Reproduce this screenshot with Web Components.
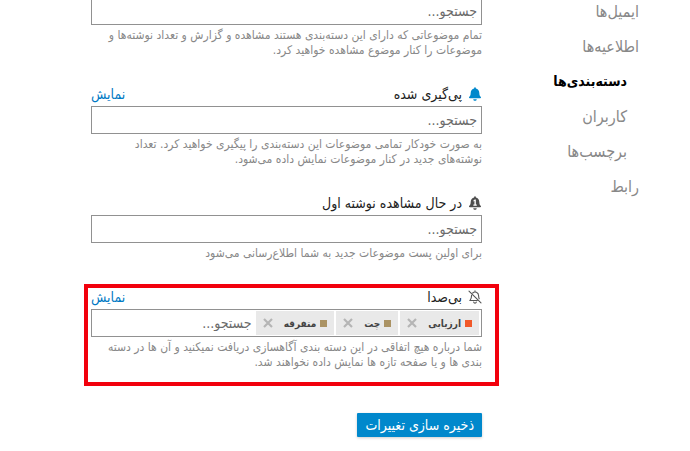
<!DOCTYPE html>
<html lang="fa" dir="rtl">
<head>
<meta charset="utf-8">
<meta name="viewport" content="width=device-width, initial-scale=1">
<title>دسته‌بندی‌ها</title>
<style>
body {
  margin: 0;
  background: #fff;
  color: #222;
  font-family: "DejaVu Sans Condensed", "DejaVu Sans", sans-serif;
  font-size: 14px;
}
</style>
</head>
<body>
<preferences-page>
  <side-nav slot="nav">
    <nav-item>ایمیل‌ها</nav-item>
    <nav-item>اطلاعیه‌ها</nav-item>
    <nav-item sub active>دسته‌بندی‌ها</nav-item>
    <nav-item sub>کاربران</nav-item>
    <nav-item sub>برچسب‌ها</nav-item>
    <nav-item>رابط</nav-item>
  </side-nav>
  <category-field untitled>
    <span slot="help">تمام موضوعاتی که دارای این دسته‌بندی هستند مشاهده و گزارش و تعداد نوشته‌ها و<br>موضوعات را کنار موضوع مشاهده خواهید کرد.</span>
  </category-field>
  <category-field icon="bell" link="نمایش">
    پی‌گیری شده
    <span slot="help">به صورت خودکار تمامی موضوعات این دسته‌بندی را پیگیری خواهید کرد. تعداد<br>نوشته‌های جدید در کنار موضوعات نمایش داده می‌شود.</span>
  </category-field>
  <category-field icon="first">
    در حال مشاهده نوشته اول
    <span slot="help">برای اولین پست موضوعات جدید به شما اطلاع‌رسانی می‌شود</span>
  </category-field>
  <category-field icon="muted" link="نمایش" marked>
    بی‌صدا
    <category-chip slot="chips" color="#f1592a">ارزیابی</category-chip>
    <category-chip slot="chips" color="#ab9364">چت</category-chip>
    <category-chip slot="chips" color="#ab9364">متفرقه</category-chip>
    <span slot="help">شما درباره هیچ اتفاقی در این دسته بندی آگاهسازی دریافت نمیکنید و آن ها در دسته<br>بندی ها و یا صفحه تازه ها نمایش داده نخواهند شد.</span>
  </category-field>
  <save-button>ذخیره سازی تغییرات</save-button>
</preferences-page>

<script>
const bellPath = 'M224 512c35.32 0 63.97-28.65 63.97-64H160.03c0 35.35 28.65 64 63.97 64zm215.39-149.71c-19.32-20.76-55.47-51.99-55.47-154.29 0-77.7-54.48-139.9-127.94-155.16V32c0-17.67-14.32-32-31.98-32s-31.98 14.33-31.98 32v20.84C118.56 68.1 64.08 130.3 64.08 208c0 102.3-36.15 133.53-55.47 154.29-6 6.45-8.66 14.16-8.61 21.71.11 16.4 12.98 32 32.1 32h383.8c19.12 0 32-15.6 32.1-32 .05-7.55-2.61-15.27-8.61-21.71z';

const icons = {
  bell: `<svg viewBox="0 0 448 512" width="12" height="14" fill="#0088cc"><path d="${bellPath}"/></svg>`,
  first: `<svg viewBox="0 0 448 512" width="12" height="14" fill="#4d4d4d"><path d="${bellPath}"/><path d="M165 165l48-38h42v186h36v42H163v-42h40V182l-38 22z" fill="#fff"/></svg>`,
  muted: `<svg viewBox="0 0 14 14" width="14" height="14" fill="none" stroke="#555" stroke-width="1.1" stroke-linecap="round"><path d="M1 1.2L13 12.8M4.7 3C6.8.9 10.6 2.4 10.6 5.8c0 1.2.2 2.1.6 2.9M3.6 5.2c0 2.8-.7 3.8-1.6 5.3h7.2M7 .8v1.1"/><path d="M5.7 12.1c.4 1.3 2.2 1.3 2.6 0"/></svg>`
};

function render(el, html) {
  const template = document.createElement('template');
  template.innerHTML = html;
  el.attachShadow({mode: 'open'}).appendChild(template.content.cloneNode(true));
}

class PreferencesPage extends HTMLElement {
  constructor() {
    super();
    render(this, `
      <style>
      :host {
        display: grid;
        grid-template-columns: 157px minmax(0, 1fr);
        padding: 0 51px 14px 91px;
      }
      main {
        display: flex;
        flex-direction: column;
        gap: 23px;
        /* the list is shown scrolled, its first box runs under the top edge */
        margin-top: -3px;
      }
      </style>
      <slot name="nav"></slot>
      <main><slot></slot></main>
    `);
  }
}

class SideNav extends HTMLElement {
  constructor() {
    super();
    render(this, `
      <style>
      :host { display: block; }
      nav {
        display: flex;
        flex-direction: column;
        margin-top: -6px;
      }
      </style>
      <nav><slot></slot></nav>
    `);
  }
}

class NavItem extends HTMLElement {
  constructor() {
    super();
    render(this, `
      <style>
      :host {
        display: block;
        font-size: 16px;
        line-height: 35px;
      }
      :host([sub]) { padding-right: 12px; }
      :host([active]) { font-size: 14px; }
      a {
        color: #888;
        text-decoration: none;
        white-space: nowrap;
      }
      :host([active]) a {
        color: #000;
        font-weight: bold;
      }
      </style>
      <a href="#"><slot></slot></a>
    `);
  }
}

class CategoryField extends HTMLElement {
  constructor() {
    super();
    const link = this.getAttribute('link');
    const title = this.hasAttribute('untitled') ? '' : `
      <header>
        <span class="icon">${icons[this.getAttribute('icon')] || ''}</span>
        <label for="search"><slot></slot></label>
        ${link ? `<a href="#">${link}</a>` : ''}
      </header>`;
    render(this, `
      <style>
      :host {
        display: block;
        position: relative;
      }
      :host([marked])::after {
        content: "";
        position: absolute;
        inset: 0 -17px -16px -7px;
        border: 4px solid #f2000d;
        pointer-events: none;
      }
      header {
        display: flex;
        align-items: center;
        gap: 6px;
        height: 25px;
      }
      .icon {
        display: flex;
        justify-content: center;
        width: 14px;
      }
      a {
        margin-right: auto;
        color: #0079c4;
        text-decoration: none;
      }
      .box {
        display: flex;
        gap: 2px;
        box-sizing: border-box;
        height: 28px;
        padding: 1px 2px;
        border: 1px solid #919191;
        background: #fff;
      }
      input {
        flex: 1;
        min-width: 0;
        margin: 0;
        padding: 0 2px;
        border: 0;
        outline: 0;
        background: none;
        font: inherit;
      }
      input::placeholder {
        color: #6b6b6b;
        opacity: 1;
      }
      .help {
        margin-top: 3px;
        color: #888;
        font-size: 12px;
        line-height: 15px;
        white-space: nowrap;
      }
      </style>
      ${title}
      <div class="box">
        <slot name="chips"></slot>
        <input id="search" type="text" placeholder="جستجو..." ${title ? '' : 'aria-label="جستجو"'}>
      </div>
      <div class="help"><slot name="help"></slot></div>
    `);
  }
}

class CategoryChip extends HTMLElement {
  constructor() {
    super();
    render(this, `
      <style>
      :host {
        display: flex;
        align-items: center;
        gap: 4px;
        padding: 0 7px;
        background: #e9e9e9;
        color: #444;
        font-size: 10px;
        font-weight: bold;
        white-space: nowrap;
      }
      i {
        width: 7px;
        height: 7px;
        background: ${this.getAttribute('color')};
      }
      button {
        display: flex;
        margin: 0 7px 0 0;
        padding: 0;
        border: 0;
        background: none;
      }
      </style>
      <i></i>
      <slot></slot>
      <button type="button" aria-label="حذف">
        <svg viewBox="0 0 10 10" width="10" height="10" stroke="#b5b5b5" stroke-width="2.2"><path d="M1 1l8 8M9 1L1 9"/></svg>
      </button>
    `);
  }
}

class SaveButton extends HTMLElement {
  constructor() {
    super();
    render(this, `
      <style>
      :host {
        display: block;
        margin-top: 20px;
      }
      button {
        display: block;
        height: 24px;
        padding: 0 8px;
        border: 0;
        border-radius: 1px;
        background: #0088cc;
        box-shadow: 0 1px 3px rgba(0, 0, 0, .2);
        color: #fff;
        font: inherit;
      }
      </style>
      <button type="button"><slot></slot></button>
    `);
  }
}

customElements.define('preferences-page', PreferencesPage);
customElements.define('side-nav', SideNav);
customElements.define('nav-item', NavItem);
customElements.define('category-field', CategoryField);
customElements.define('category-chip', CategoryChip);
customElements.define('save-button', SaveButton);
</script>
</body>
</html>
